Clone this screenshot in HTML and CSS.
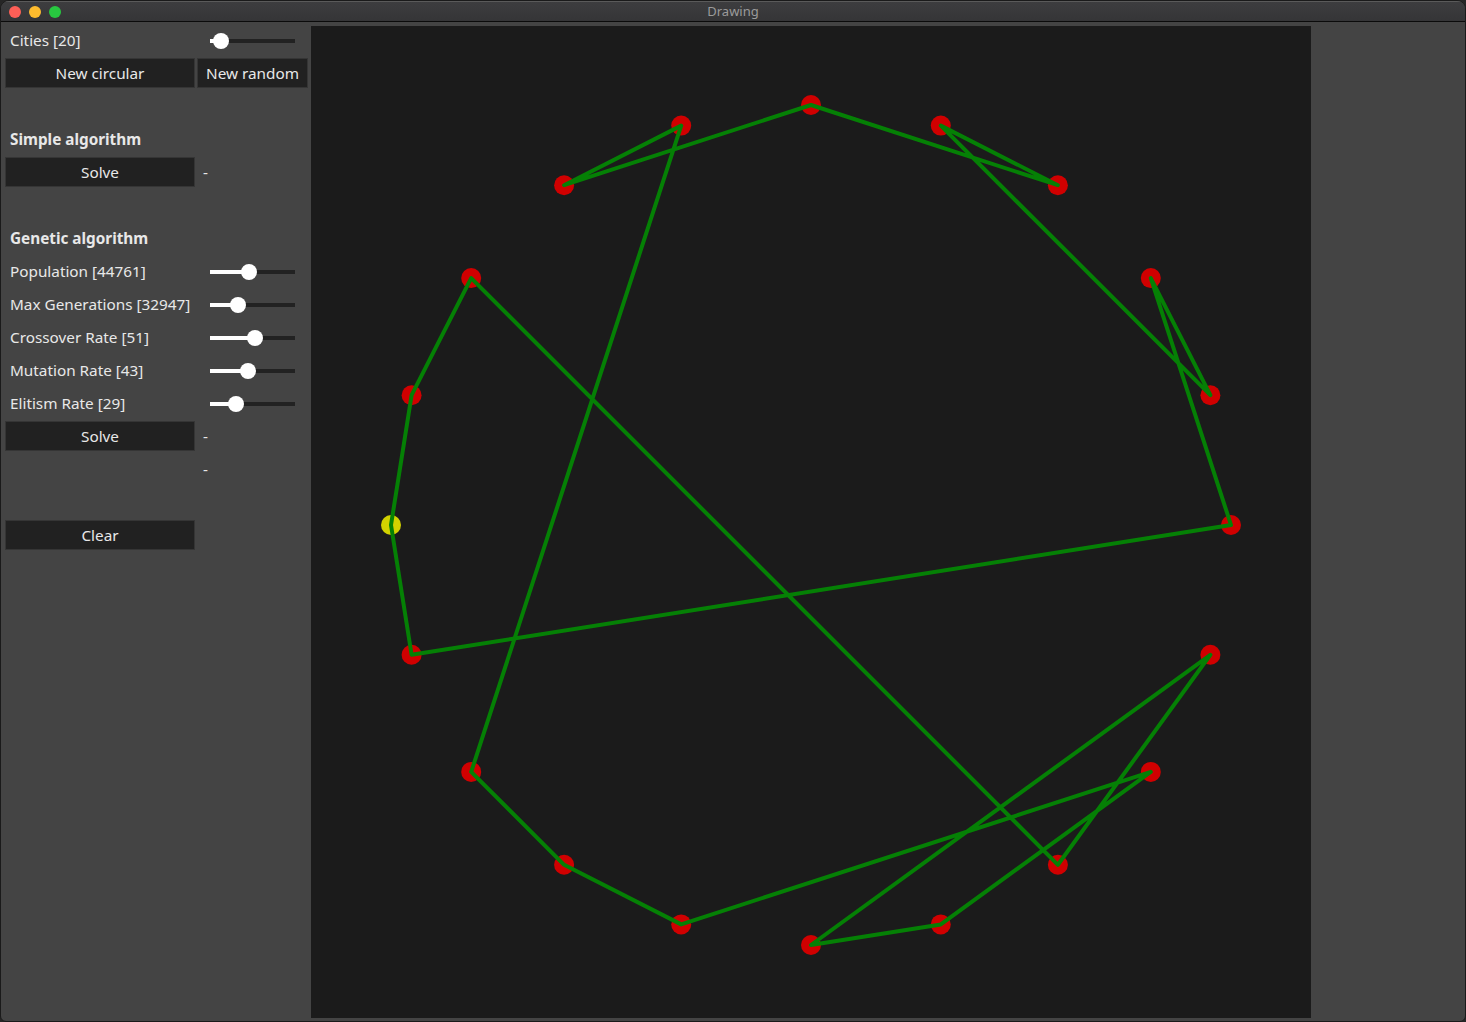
FILE: index.html
```html
<!DOCTYPE html>
<html>
<head>
<meta charset="utf-8">
<title>Drawing</title>
<link rel="stylesheet" href="styles.css">
</head>
<body>
<div class="window">
  <div class="titlebar">
    <div class="lights">
      <span class="light red"></span>
      <span class="light yellow"></span>
      <span class="light green"></span>
    </div>
    <div class="title">Drawing</div>
  </div>
  <div class="content">
    <div class="panel">
      <div class="row">
        <div class="label">Cities [20]</div>
        <div class="slider"><div class="fill" style="width:11px"></div><div class="knob" style="left:3px"></div></div>
      </div>
      <div class="row">
        <button class="btn">New circular</button>
        <button class="btn">New random</button>
      </div>
      <div class="row"></div>
      <div class="row"><div class="heading">Simple algorithm</div></div>
      <div class="row">
        <button class="btn">Solve</button>
        <div class="dash">-</div>
      </div>
      <div class="row"></div>
      <div class="row"><div class="heading">Genetic algorithm</div></div>
      <div class="row">
        <div class="label">Population [44761]</div>
        <div class="slider"><div class="fill" style="width:39px"></div><div class="knob" style="left:31px"></div></div>
      </div>
      <div class="row">
        <div class="label">Max Generations [32947]</div>
        <div class="slider"><div class="fill" style="width:28px"></div><div class="knob" style="left:20px"></div></div>
      </div>
      <div class="row">
        <div class="label">Crossover Rate [51]</div>
        <div class="slider"><div class="fill" style="width:45px"></div><div class="knob" style="left:37px"></div></div>
      </div>
      <div class="row">
        <div class="label">Mutation Rate [43]</div>
        <div class="slider"><div class="fill" style="width:38px"></div><div class="knob" style="left:30px"></div></div>
      </div>
      <div class="row">
        <div class="label">Elitism Rate [29]</div>
        <div class="slider"><div class="fill" style="width:26px"></div><div class="knob" style="left:18px"></div></div>
      </div>
      <div class="row">
        <button class="btn">Solve</button>
        <div class="dash">-</div>
      </div>
      <div class="row">
        <div class="spacer"></div>
        <div class="dash">-</div>
      </div>
      <div class="row"></div>
      <div class="row">
        <button class="btn">Clear</button>
      </div>
    </div>
    <div class="canvas">
      <svg width="1000" height="992" viewBox="0 0 1000 992">
        <g class="nodes">
          <circle cx="100.6" cy="369.2" r="10"/>
          <circle cx="160.2" cy="252.1" r="10"/>
          <circle cx="253.1" cy="159.2" r="10"/>
          <circle cx="370.2" cy="99.6" r="10"/>
          <circle cx="500" cy="79" r="10"/>
          <circle cx="629.8" cy="99.6" r="10"/>
          <circle cx="746.9" cy="159.2" r="10"/>
          <circle cx="839.8" cy="252.1" r="10"/>
          <circle cx="899.4" cy="369.2" r="10"/>
          <circle cx="920" cy="499" r="10"/>
          <circle cx="899.4" cy="628.8" r="10"/>
          <circle cx="839.8" cy="745.9" r="10"/>
          <circle cx="746.9" cy="838.8" r="10"/>
          <circle cx="629.8" cy="898.4" r="10"/>
          <circle cx="500" cy="919" r="10"/>
          <circle cx="370.2" cy="898.4" r="10"/>
          <circle cx="253.1" cy="838.8" r="10"/>
          <circle cx="160.2" cy="745.9" r="10"/>
          <circle cx="100.6" cy="628.8" r="10"/>
        </g>
        <circle class="start" cx="80" cy="499" r="10"/>
        <polygon class="route" points="80,499 100.6,369.2 160.2,252.1 746.9,838.8 899.4,628.8 500,919 629.8,898.4 839.8,745.9 370.2,898.4 253.1,838.8 160.2,745.9 370.2,99.6 253.1,159.2 500,79 746.9,159.2 629.8,99.6 899.4,369.2 839.8,252.1 920,499 100.6,628.8"/>
      </svg>
    </div>
  </div>
</div>
</body>
</html>
```
FILE: styles.css
```css
* { box-sizing: border-box; }
html, body {
  margin: 0;
  padding: 0;
  width: 1466px;
  height: 1022px;
  overflow: hidden;
  background: #262626;
}
.window {
  width: 1466px;
  height: 1022px;
  background: #444444;
  border: 1px solid #1a1a1a;
  border-radius: 9px 9px 6px 6px;
  overflow: hidden;
  display: flex;
  flex-direction: column;
  font-family: "Noto Sans", sans-serif;
}
.titlebar {
  height: 21px;
  flex: none;
  background: linear-gradient(#3d3d3f, #353537);
  border-top: 1px solid #5a5a5a;
  border-bottom: 1px solid #0b0b0b;
  position: relative;
  display: flex;
  align-items: center;
  justify-content: center;
}
.lights {
  position: absolute;
  left: 8px;
  top: 4px;
  display: flex;
  gap: 8px;
}
.light {
  width: 12px;
  height: 12px;
  border-radius: 50%;
  display: block;
}
.light.red { background: #fe5f57; }
.light.yellow { background: #febc2e; }
.light.green { background: #28c840; }
.title {
  color: #9b9b9b;
  font-family: "Noto Sans", sans-serif;
  font-size: 13px;
  line-height: 20px;
  margin-top: -1px;
}
.content {
  flex: 1;
  display: flex;
  align-items: flex-start;
}
.panel {
  width: 310px;
  flex: none;
  padding: 3px 0 0 4px;
  display: flex;
  flex-direction: column;
  gap: 3px;
}
.row {
  height: 30px;
  display: grid;
  grid-template-columns: 190px 111px;
  column-gap: 2px;
  align-items: center;
}
.label {
  color: #e8e8e8;
  font-size: 15.3px;
  padding-left: 5px;
  white-space: nowrap;
}
.heading {
  color: #e8e8e8;
  font-size: 15.3px;
  font-weight: 700;
  padding-left: 5px;
  white-space: nowrap;
}
.btn {
  height: 30px;
  margin: 0;
  background: #212121;
  border: 1px solid #353535;
  color: #e8e8e8;
  font-family: "Noto Sans", sans-serif;
  font-size: 15.3px;
  padding: 0;
}
.dash {
  color: #e8e8e8;
  font-size: 15.3px;
  padding-left: 6px;
}
.slider {
  position: relative;
  margin-left: 13px;
  margin-top: 2px;
  width: 85px;
  height: 4px;
  background: #222222;
}
.fill {
  height: 4px;
  background: #ffffff;
}
.knob {
  position: absolute;
  top: -6px;
  width: 16px;
  height: 16px;
  border-radius: 50%;
  background: #ffffff;
}
.canvas {
  width: 1000px;
  height: 992px;
  margin-top: 4px;
  margin-left: 0;
  background: #1b1b1b;
  flex: none;
}
.canvas svg { display: block; }
.nodes circle { fill: #d00000; }
.start { fill: #d2d200; }
.route {
  fill: none;
  stroke: #058005;
  stroke-width: 4;
  stroke-linejoin: round;
}
```
